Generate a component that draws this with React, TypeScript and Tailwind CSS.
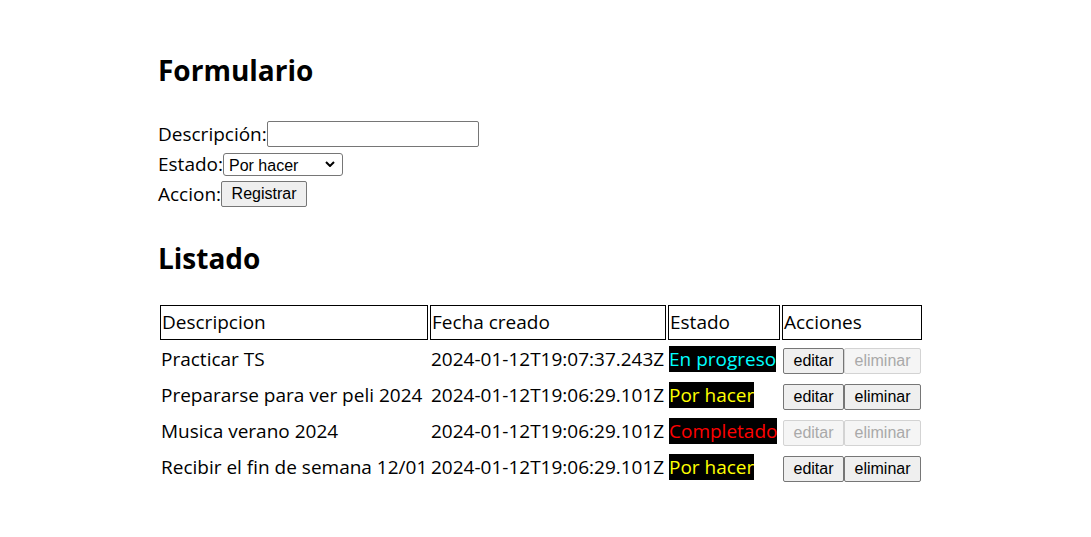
import { useState } from 'react';

type Estado = 'Por hacer' | 'En progreso' | 'Completado';

interface Tarea {
  descripcion: string;
  fecha: string;
  estado: Estado;
}

const tareasIniciales: Tarea[] = [
  { descripcion: 'Practicar TS', fecha: '2024-01-12T19:07:37.243Z', estado: 'En progreso' },
  { descripcion: 'Prepararse para ver peli 2024', fecha: '2024-01-12T19:06:29.101Z', estado: 'Por hacer' },
  { descripcion: 'Musica verano 2024', fecha: '2024-01-12T19:06:29.101Z', estado: 'Completado' },
  { descripcion: 'Recibir el fin de semana 12/01', fecha: '2024-01-12T19:06:29.101Z', estado: 'Por hacer' },
];

const estadoColor: Record<Estado, string> = {
  'Por hacer': 'text-[#ffff00]',
  'En progreso': 'text-[#00ffff]',
  Completado: 'text-[#ff0000]',
};

const btnBase =
  "h-[26px] px-[9.5px] border rounded-[2px] text-[16px] leading-none font-['Liberation_Sans',Arial,sans-serif]";
const btnOn = `${btnBase} bg-[#efefef] border-[#767676] text-black`;
const btnOff = `${btnBase} bg-[#f5f5f5] border-[#d3d3d3] text-[#a9a9a9]`;

const App = () => {
  const [tareas] = useState<Tarea[]>(tareasIniciales);
  const [descripcion, setDescripcion] = useState('');
  const [estado, setEstado] = useState<Estado>('Por hacer');

  return (
    <div className="min-h-[537px] bg-white text-black font-['Open_Sans','Noto_Sans',sans-serif] text-[19px] pl-[158px] pt-[48px]">
      <h1 className="text-[28px] font-bold leading-[44px]">Formulario</h1>
      <div className="mt-[27px]">
        <div className="flex items-center h-[30px]">
          <span>Descripción:</span>
          <input
            value={descripcion}
            onChange={(e) => setDescripcion(e.target.value)}
            className="w-[212px] h-[26px] border border-[#767676] rounded-[2px] bg-white px-1 text-[16px]"
          />
        </div>
        <div className="flex items-center h-[30px]">
          <span>Estado:</span>
          <div className="flex items-center w-[120px] h-[23px] border border-[#767676] rounded-[3px] bg-white">
            <select
              value={estado}
              onChange={(e) => setEstado(e.target.value as Estado)}
              className="appearance-none w-full h-full pl-[5px] bg-transparent text-[16px] outline-none font-['Liberation_Sans',Arial,sans-serif]"
            >
              <option>Por hacer</option>
              <option>En progreso</option>
              <option>Completado</option>
            </select>
            <svg className="-ml-[17px] mr-[7px] shrink-0 pointer-events-none" width="10" height="6" viewBox="0 0 10 6">
              <path d="M1 1 L5 5 L9 1" fill="none" stroke="#000" strokeWidth="2" />
            </svg>
          </div>
        </div>
        <div className="flex items-center h-[30px]">
          <span>Accion:</span>
          <button className={btnOn}>Registrar</button>
        </div>
      </div>

      <h2 className="text-[28px] font-bold leading-[44px] mt-[27px]">Listado</h2>

      <table className="mt-[23px] w-[766px] border-separate border-spacing-[2px] table-fixed whitespace-nowrap">
        <thead>
          <tr className="h-[35px]">
            <th className="w-[268px] border border-black text-left font-normal px-[1px]">Descripcion</th>
            <th className="w-[236px] border border-black text-left font-normal px-[1px]">Fecha creado</th>
            <th className="w-[112px] border border-black text-left font-normal px-[1px]">Estado</th>
            <th className="w-[140px] border border-black text-left font-normal px-[1px]">Acciones</th>
          </tr>
        </thead>
        <tbody>
          {tareas.map((t) => {
            const completado = t.estado === 'Completado';
            const enProgreso = t.estado === 'En progreso';
            return (
              <tr key={t.descripcion} className="h-[34px]">
                <td className="px-[1px] overflow-visible">{t.descripcion}</td>
                <td className="px-[1px] overflow-visible">{t.fecha}</td>
                <td className="px-[1px] overflow-visible">
                  <span className={`inline-block bg-black h-[26px] leading-[26px] ${estadoColor[t.estado]}`}>
                    {t.estado}
                  </span>
                </td>
                <td className="px-[1px]">
                  <div className="flex pt-[4px]">
                    <button disabled={completado} className={completado ? btnOff : btnOn}>
                      editar
                    </button>
                    <button disabled={completado || enProgreso} className={completado || enProgreso ? btnOff : btnOn}>
                      eliminar
                    </button>
                  </div>
                </td>
              </tr>
            );
          })}
        </tbody>
      </table>
    </div>
  );
};

export default App;
